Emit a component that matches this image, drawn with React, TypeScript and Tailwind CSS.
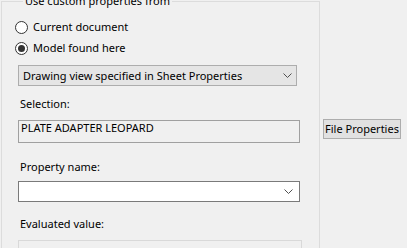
function Chevron() {
  return (
    <svg width="9" height="5" viewBox="0 0 9 5" className="shrink-0">
      <path d="M0.5 0.5 L4.5 4.5 L8.5 0.5" fill="none" stroke="#505050" strokeWidth="1" />
    </svg>
  );
}

function Radio({ label, checked }: { label: string; checked?: boolean }) {
  return (
    <div className="flex items-center h-[16px] gap-[5px]">
      <div className="w-[13px] h-[13px] rounded-full border border-[#333] bg-white flex items-center justify-center">
        {checked && <div className="w-[7px] h-[7px] rounded-full bg-[#333]" />}
      </div>
      <span>{label}</span>
    </div>
  );
}

export default function App() {
  return (
    <div
      className="w-[407px] h-[248px] overflow-hidden bg-[#f0f0f0] flex items-start text-[11px] leading-[16px] text-black"
      style={{ fontFamily: '"Noto Sans", "Open Sans", sans-serif' }}
    >
      {/* Group box */}
      <fieldset className="ml-[1px] mt-[-7px] w-[319px] h-[280px] border border-[#dcdcdc] pl-[16px] pr-0 pt-0 m-0 shrink-0">
        <legend className="ml-[5px] px-[2px] h-[16px]">Use custom properties from</legend>

        <div className="mt-[10px] ml-[-3px] flex flex-col gap-[5px]">
          <Radio label="Current document" />
          <Radio label="Model found here" checked />
        </div>

        {/* Source combo */}
        <div className="mt-[9px] w-[279px] h-[21px] border border-[#adadad] bg-[#e5e5e5] flex items-center justify-between pl-[4px] pr-[4px]">
          <span>Drawing view specified in Sheet Properties</span>
          <Chevron />
        </div>

        <div className="mt-[10px] pl-[2px]">Selection:</div>
        <div className="mt-[8px] w-[282px] h-[23px] border border-[#a0a0a0] bg-[#f0f0f0] px-[2px] leading-[14px]">
          PLATE ADAPTER LEOPARD
        </div>

        <div className="mt-[16px] pl-[2px]">Property name:</div>
        <div className="mt-[6px] w-[282px] h-[21px] border border-[#7a7a7a] bg-white flex items-center justify-end pr-[6px]">
          <Chevron />
        </div>

        <div className="mt-[14px] pl-[2px]">Evaluated value:</div>
        <div className="mt-[8px] w-[284px] h-[30px] border border-[#d9d9d9] bg-[#f0f0f0]" />
      </fieldset>

      <button className="ml-[3px] mt-[119px] w-[78px] h-[20px] border border-[#adadad] bg-[#e1e1e1] flex items-center justify-center whitespace-nowrap text-black">
        File Properties
      </button>
    </div>
  );
}
